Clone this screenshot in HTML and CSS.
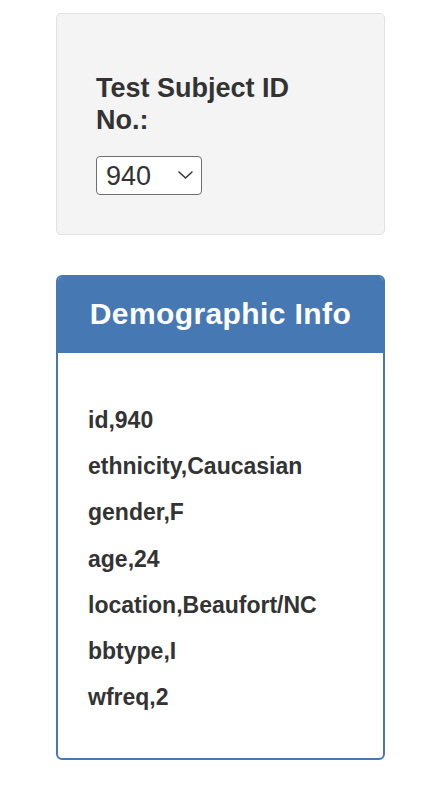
FILE: index.html
```html
<!DOCTYPE html>
<html>
<head>
<meta charset="utf-8">
<link rel="stylesheet" href="styles.css">
</head>
<body>
<div class="page">
  <div class="well">
    <h3 class="well-title">Test Subject ID No.:</h3>
    <div class="select-wrap">
      <select class="select">
        <option>940</option>
      </select>
      <svg class="chevron" width="15" height="8" viewBox="0 0 15 8"><path d="M1 1 L7.5 7 L14 1" fill="none" stroke="#333" stroke-width="1.5" stroke-linecap="round" stroke-linejoin="round"/></svg>
    </div>
  </div>
  <div class="panel">
    <div class="panel-heading">Demographic Info</div>
    <div class="panel-body">
      <p class="row">id,940</p>
      <p class="row">ethnicity,Caucasian</p>
      <p class="row">gender,F</p>
      <p class="row">age,24</p>
      <p class="row">location,Beaufort/NC</p>
      <p class="row">bbtype,I</p>
      <p class="row">wfreq,2</p>
    </div>
  </div>
</div>
</body>
</html>
```

FILE: styles.css
```css
* { box-sizing: border-box; }
html, body { margin: 0; padding: 0; background: #fff; }
body {
  font-family: "Liberation Sans", Arial, Helvetica, sans-serif;
  color: #333;
}
.page {
  padding: 13px 0 0 56px;
  width: 385px;
}
.well {
  width: 329px;
  height: 222px;
  background: #f4f4f4;
  border: 1px solid #e1e1e1;
  border-radius: 5px;
  padding: 58px 40px 0 39px;
}
.well-title {
  margin: 0;
  font-size: 27px;
  line-height: 32px;
  font-weight: 700;
  width: 220px;
  color: #333;
}
.select-wrap {
  position: relative;
  width: 106px;
  height: 39px;
  margin-top: 20px;
}
.select {
  appearance: none;
  -webkit-appearance: none;
  width: 106px;
  height: 39px;
  border: 1px solid #6f6f6f;
  border-radius: 4px;
  background: #fff;
  font-family: "Liberation Sans", Arial, sans-serif;
  font-size: 27px;
  color: #333;
  padding: 0 0 0 9px;
  margin: 0;
}
.chevron {
  position: absolute;
  left: 82px;
  top: 15px;
  pointer-events: none;
}
.panel {
  margin-top: 40px;
  width: 329px;
  height: 485px;
  border: 2px solid #4679b4;
  border-radius: 6px;
  overflow: hidden;
  background: #fff;
}
.panel-heading {
  height: 76px;
  background: #4679b4;
  color: #fff;
  font-size: 30px;
  letter-spacing: 0.4px;
  font-weight: 700;
  display: flex;
  align-items: center;
  justify-content: center;
  padding-bottom: 2px;
}
.panel-body {
  padding: 44px 20px 0 30px;
}
.row {
  margin: 0;
  font-size: 23px;
  line-height: 46.2px;
  font-weight: 700;
  color: #333;
}
```
